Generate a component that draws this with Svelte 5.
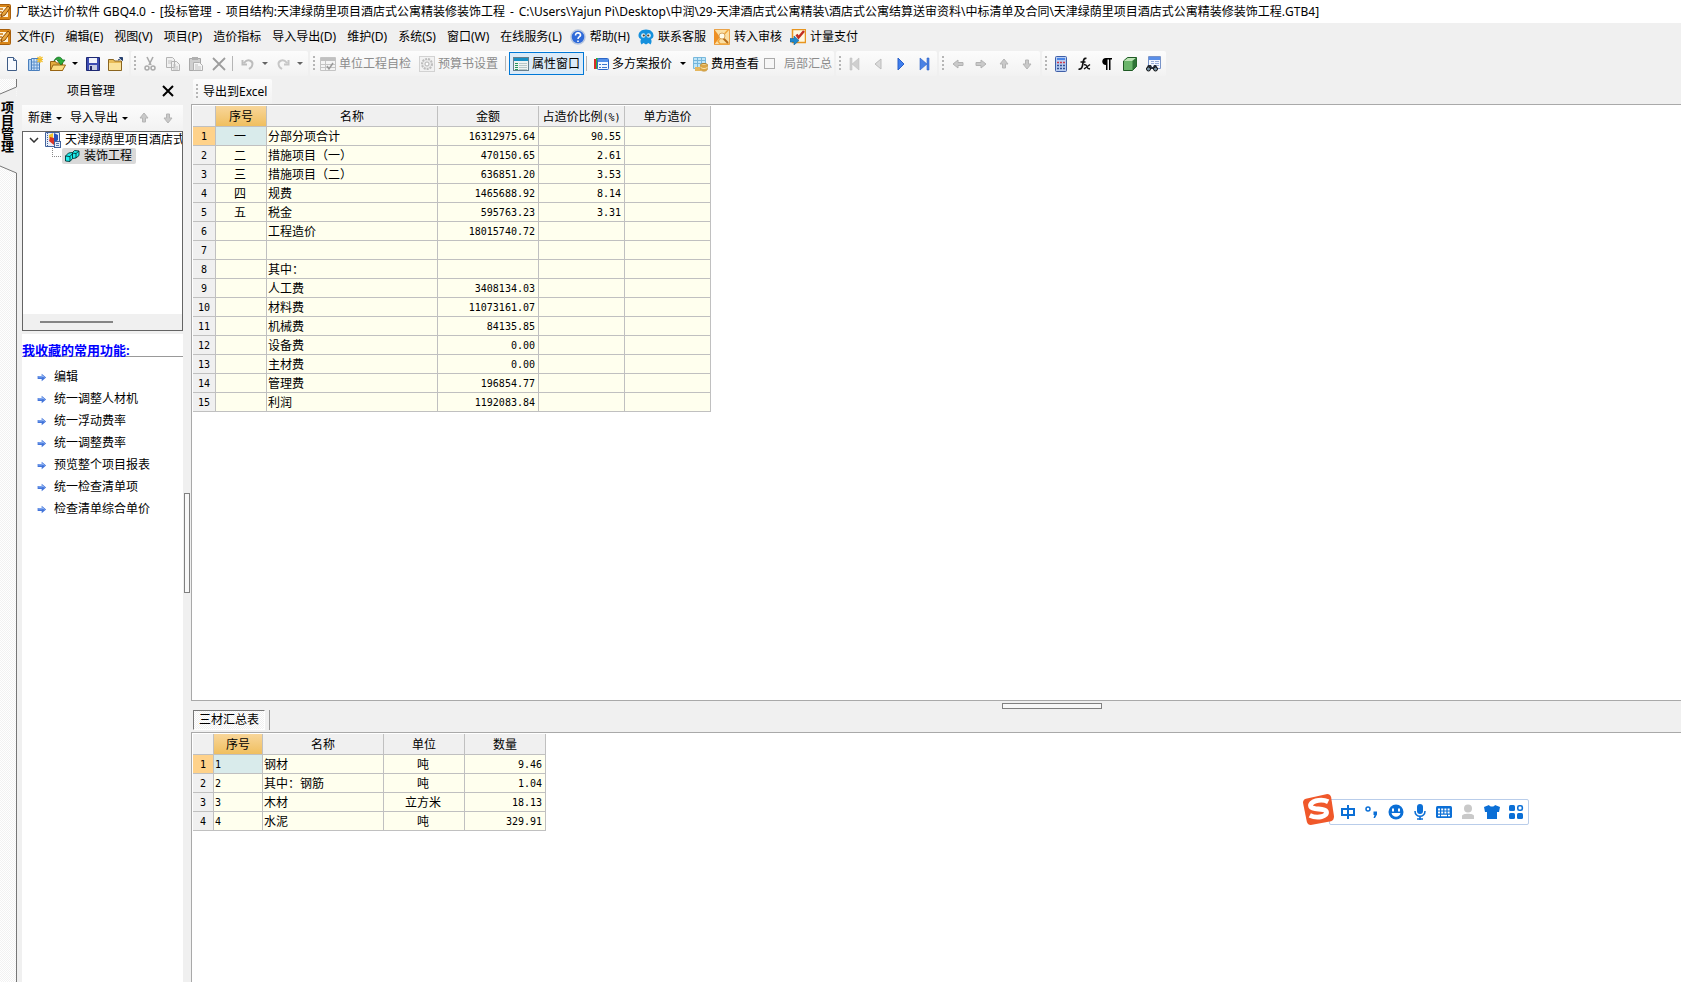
<script>
    const icons = {
        app: '<rect x="0.5" y="0.5" width="15" height="15" rx="1" fill="#d98618" stroke="#a85f0c"/><path d="M3 3h10v10H3z" fill="#fff3d8"/><path d="M3 5h5M3 8h4M3 11h4" stroke="#d07a10" stroke-width="1.5"/><path d="M13 2L7 9l-1 4 4-2 5-7z" fill="#e8a53c" stroke="#8f4d07"/>',
        doc: '<path d="M3.5 1.5h6l3 3v10h-9z" fill="#f7faff" stroke="#3f5c86"/><path d="M9.5 1.5v3h3" fill="#c5d6ee" stroke="#3f5c86"/>',
        project: '<path d="M1.5 3.5h8v11h-8z" fill="#a9ccf0" stroke="#4a7fbd"/><path d="M4.5 2.5h8v12h-8z" fill="#cfe3f8" stroke="#4a7fbd"/><path d="M7 3v11M10 3v11M5 6h7M5 9h7M5 12h7" stroke="#5a90cc"/><path d="M13 0v7M9.500 3.500h6.500M10.500 1l5 5M15.500 1l-5 5" stroke="#f3bf2b" stroke-width="1.200"/>',
        open: '<path d="M.5 5.500h5l1 1.500h6v7.500H.5z" fill="#e4ab3d" stroke="#986412"/><path d="M3 9h12.500l-3 5.500H.5z" fill="#fbdc82" stroke="#986412"/><path d="M4 5C6 0 11 0 12.500 4H15l-4 5-4-5h2.500C8.500 2.500 6 3 4 5z" fill="#2bb03c" stroke="#12691d" stroke-width=".7"/>',
        save: '<path d="M1.500 1.500h13v13h-13z" fill="#3c4bb2" stroke="#1d2872"/><path d="M4 2h8v5H4z" fill="#f2f4fb"/><path d="M4 9h8v5H4z" fill="#c6cbe3"/><path d="M5 10h2v4H5z" fill="#20286a"/>',
        folder: '<path d="M.5 3.500h5l1 1.500h7v9.500H.5z" fill="#e8bb58" stroke="#8a6520"/><path d="M1 7h12v7H1z" fill="#fbe29c"/><path d="M10 4l4-2M11.500 1.500h3v3z" stroke="#26406f" fill="#26406f"/>',
        cut: '<path d="M5 1l4 8M11 1L7 9" stroke="#aaa" stroke-width="1.600"/><circle cx="5" cy="12" r="2" fill="none" stroke="#aaa" stroke-width="1.500"/><circle cx="11" cy="12" r="2" fill="none" stroke="#aaa" stroke-width="1.500"/>',
        copy: '<path d="M1.500 1.500h6l2 2v8h-8zM6.500 5.500h5l3 3v6h-8z" fill="#f1f1f1" stroke="#b3b3b3"/><path d="M3 5h4M3 7h3M8 9h3M8 11h5M8 13h5" stroke="#c2c2c2"/>',
        paste: '<path d="M1.500 2.500h11v12h-11z" fill="#cfcfcf" stroke="#a9a9a9"/><path d="M4 1h6v3H4z" fill="#b0b0b0"/><path d="M5.500 6.500h6l3 3v5h-9z" fill="#f4f4f4" stroke="#b0b0b0"/><path d="M7 9h3M7 11h6M7 13h6" stroke="#c2c2c2"/>',
        del: '<path d="M2 2l12 12M14 2L2 14" stroke="#9d9d9d" stroke-width="1.800"/>',
        undo: '<path d="M2.500 4v4.500H7M4 7c4-5 10-2 8 3-.5 1.500-1.500 2-3 3" fill="none" stroke="#bdbdbd" stroke-width="2"/>',
        redo: '<path d="M13.500 4v4.500H9M12 7c-4-5-10-2-8 3 .5 1.500 1.500 2 3 3" fill="none" stroke="#c6c6c6" stroke-width="2"/>',
        check: '<path d="M.5 1.500h15v13H.5z" fill="#f4f4f4" stroke="#c4c4c4"/><path d="M1 2h14v3H1z" fill="#c0c0c0"/><path d="M1 8.500h14M1 11.500h14M5.500 5v9" stroke="#c4c4c4"/><path d="M7 10l2 3 4-6" fill="none" stroke="#999" stroke-width="1.500"/>',
        setting: '<rect x=".5" y=".5" width="15" height="15" fill="#f2f2f2" stroke="#d2d2d2"/><circle cx="8" cy="8" r="5" fill="#e9e9e9" stroke="#bdbdbd" stroke-width="2" stroke-dasharray="2 1"/><circle cx="8" cy="8" r="2" fill="#fff" stroke="#b5b5b5"/>',
        panel: '<rect x=".5" y="1.500" width="15" height="13" fill="#eef3f2" stroke="#677f8c"/><path d="M1 2h14v3H1z" fill="#1a8fc4"/><path d="M2 7.500h3M2 9.500h3M2 11.500h3M2 13.500h3" stroke="#27965a"/><path d="M6 7.500h8M6 9.500h8M6 11.500h8M6 13.500h8" stroke="#b7c7c8"/>',
        plans: '<path d="M1 3h3v10H1z" fill="#d92d27"/><path d="M3 2h3v11H3z" fill="#2fae3e"/><rect x="4.500" y="2.500" width="11" height="11" rx="1" fill="#f3f8ff" stroke="#2b66c7"/><path d="M5 3h10v3H5z" fill="#5490ea"/><path d="M6 8.500h2M9 8.500h5M6 11.500h2M9 11.500h5" stroke="#3f78cf"/>',
        cost: '<path d="M1.500 1.500h12v11h-12z" fill="#bfe5f7" stroke="#79b9dc"/><path d="M1 4.500h12M1 7.500h12M5.500 1v11M9.500 1v11" stroke="#74b5da"/><path d="M3 11h6v4H3z" fill="#e6b75d"/><ellipse cx="12" cy="9" rx="3.500" ry="1.500" fill="#f5d68d" stroke="#b07d22"/><path d="M8.500 9v4c0 3 7 3 7 0V9" fill="#dba646" stroke="#c49742" stroke-width=".6"/><path d="M8.500 11c1 2 6 2 7 0" fill="none" stroke="#fae3a8"/>',
        first: '<path d="M3 2h2v12H3zM12 2v12L5 8z" fill="#cfcfcf" stroke="#bababa" stroke-width=".5"/>',
        prev: '<path d="M11 3v10L5 8z" fill="#dadada" stroke="#bcbcbc"/>',
        next: '<path d="M5 2v12l6-6z" fill="#3f7fee" stroke="#2c61c7"/>',
        last: '<path d="M11 2h2v12h-2zM4 2v12l7-6z" fill="#4a82e4" stroke="#2c61c7" stroke-width=".6"/>',
        left: '<path d="M3 8l5-4v2.500h5v3H8V12z" fill="#c9c9c9" stroke="#b2b2b2"/>',
        right: '<path d="M13 8L8 4v2.500H3v3h5V12z" fill="#c9c9c9" stroke="#b2b2b2"/>',
        up: '<path d="M8 3l4 5H9.500v4h-3V8H4z" fill="#c9c9c9" stroke="#b5b5b5"/>',
        down: '<path d="M8 13l4-5H9.500V4h-3v4H4z" fill="#c9c9c9" stroke="#b5b5b5"/>',
        calc: '<rect x="2.500" y=".5" width="11" height="15" rx="1" fill="#b9cdf1" stroke="#3f5fa8"/><path d="M4 2h8v2H4z" fill="#4b85e6"/><path d="M4 6.500h2m1 0h2m1 0h2" stroke="#cf3a48" stroke-width="1.500"/><path d="M4 9.500h2m1 0h2m1 0h2M4 12.500h2m1 0h2m1 0h2" stroke="#324f93" stroke-width="1.500"/>',
        fx: '<path d="M10.500 2.500C8 1.500 7.500 4 7 7s-1 7-4.500 6M4.500 6h5" fill="none" stroke="#111" stroke-width="1.700"/><path d="M8 8.500l2 .5 2 3.500 2 .5M14 8.500L8 13" fill="none" stroke="#111" stroke-width="1.400"/>',
        para: '<path d="M7 9C2 9 2 2 7 2h6v1.500h-1.500V14H10V3.500H8.500V14H7z" fill="#000"/>',
        cube: '<path d="M1.500 5l4-3.500h9v9l-4 4h-9z" fill="#6ab56a" stroke="#1f5a24"/><path d="M2 5l4-3h8l-4 3z" fill="#bde3b6"/><path d="M10.500 5l4-3.500v9l-4 4z" fill="#2f7437"/>',
        find: '<path d="M3.500 .5h12v12h-12z" fill="#f4f8ff" stroke="#7893c8"/><path d="M4 1h11v3H4z" fill="#5a8fe8"/><path d="M6 5.500h3M10 5.500h4M6 7.500h3M10 7.500h4M10 9.500h4" stroke="#99aed8"/><path d="M3 9h3l1 2h1l1-2h2l2 4H1z" fill="#27303c"/><circle cx="3.500" cy="13" r="2" fill="#7895a8" stroke="#111"/><circle cx="10.500" cy="13" r="2" fill="#7895a8" stroke="#111"/>',
        help: '<circle cx="8" cy="8" r="7" fill="#2f6ad9" stroke="#b9c7de" stroke-width="1.500"/><path d="M5.500 6.500c0-4 5.500-3 5 0-.2 1.200-2.500 1.500-2.500 3.500M8 11.500v1.500" stroke="#fff" stroke-width="1.600" fill="none"/>',
        service: '<path d="M8 .5c5 0 7.500 3 7.500 6 0 2-1 3-2.500 3.500 1 2 .5 4-.5 5.500l-2-1.500L8 15.500 5.500 14l-2 1.500C2.500 14 2 12 3 10 1.500 9.500.5 8.500.5 6.500c0-3 2.500-6 7.500-6z" fill="#1590dd"/><circle cx="5.300" cy="6.500" r="2.200" fill="#d9edf5"/><circle cx="10.700" cy="6.500" r="2.200" fill="#d9edf5"/><circle cx="5.800" cy="6.500" r="1.100" fill="#593b22"/><circle cx="10.200" cy="6.500" r="1.100" fill="#593b22"/>',
        audit: '<path d="M.5 .5h15v15H.5z" fill="#fbdfa3" stroke="#e9a24a"/><path d="M0 0l6 8-6 8z" fill="#ee8f22"/><path d="M15 0L4 12l2 3h9" fill="none" stroke="#f0a63c" stroke-width="1.500"/><path d="M9 9l5 5" stroke="#b36b18" stroke-width="2"/><circle cx="8" cy="7" r="3" fill="#fffbe9" stroke="#d7a55f"/>',
        pay: '<path d="M2.500 .5h13v13h-13z" fill="#fff8df" stroke="#e8951f" stroke-width="1.500"/><path d="M14 2L8.500 8.500l-2-3" fill="none" stroke="#c12e20" stroke-width="2.500"/><path d="M0 9.500h4V7l5 4.500L4 16v-3H0z" fill="#2188cb" stroke="#10669f" stroke-width=".6"/>',
        building: '<path d="M.5 .5h14v14H.5z" fill="#e8eef8" stroke="#43639c"/><path d="M2.500 1v14" stroke="#43639c" stroke-dasharray="1 1"/><path d="M4 3l4-2v8L4 6z" fill="#f2c32e"/><path d="M9 1l4 2v5L9 11z" fill="#2852bb"/><path d="M5 5l4 1v7L4 9z" fill="#d93426"/><rect x="9.500" y="9.500" width="6" height="6" fill="#e3ecf9" stroke="#43639c"/><path d="M11 11.500h3M11 13.500h3" stroke="#5273b0"/>',
        unit: '<path d="M1.500 8l3-3 4-.5 2-2 4.500.5v4.500l-3 2.500-3.500.5-2.500 3-4.500-.5z" fill="#1feeee" stroke="#033" stroke-width=".9"/><path d="M1.500 8l4.500.5 2.500-3M6 8.500V13M8.500 4.500v6M8.500 5l3.500.5 3-2.500M12 5.500V10" fill="none" stroke="#033" stroke-width=".9"/>',
        arrow: '<path d="M1 5.500h6.500V2L14.500 8l-7 6v-3.500H1z" fill="#4274da"/><path d="M2 7h6.500V5l3.500 3" fill="none" stroke="#9dbff8" stroke-width="1.500"/>',
        zhong: '<path d="M2 5h12v6H2zM8 1v14" fill="none" stroke="#0b6fd6" stroke-width="2"/>',
        punct: '<circle cx="4" cy="5" r="2" fill="none" stroke="#0b6fd6" stroke-width="1.500"/><path d="M9.500 7.500h3.500v3L11 14H9.500l1-3h-1z" fill="#0b6fd6"/>',
        smile: '<circle cx="8" cy="8" r="7.500" fill="#0b6fd6"/><path d="M5 4.500v3M11 4.500v3" stroke="#fff" stroke-width="2"/><path d="M3.500 9h9c-1 5-8 5-9 0z" fill="#fff"/>',
        mic: '<rect x="5" width="6" height="10" rx="3" fill="#0b6fd6"/><path d="M3 7c0 7 10 7 10 0M8 12v4M5 15h6" fill="none" stroke="#0b6fd6" stroke-width="1.600"/>',
        keyboard: '<rect y="2" width="16" height="12" rx="1.500" fill="#0b6fd6"/><path d="M2 5.500h12M2 8.500h12" stroke="#fff" stroke-width="2" stroke-dasharray="2 1.200"/><path d="M2 11.500h2m1 0h6m1 0h2" stroke="#fff" stroke-width="1.400"/>',
        person: '<circle cx="8" cy="4.500" r="4" fill="#c9c9c9"/><path d="M2 15v-3c0-3 12-3 12 0v3z" fill="#c9c9c9"/>',
        shirt: '<path d="M5 1c1 2 5 2 6 0l5 2-1 5h-2v7H3V8H1L0 3z" fill="#0b6fd6"/>',
        tools: '<rect x="1" y="1" width="6" height="6" rx="1.500" fill="#0b6fd6"/><rect x="1" y="9" width="6" height="6" rx="1.500" fill="#0b6fd6"/><rect x="9" y="9" width="6" height="6" rx="1.500" fill="#0b6fd6"/><rect x="9.800" y="1.800" width="4.500" height="4.500" rx="1.500" fill="none" stroke="#0b6fd6" stroke-width="1.600"/>'
    };

    const titleParts = [
        '广联达计价软件 GBQ4.0',
        '[投标管理',
        '项目结构:天津绿荫里项目酒店式公寓精装修装饰工程',
        'C:\\Users\\Yajun Pi\\Desktop\\中润\\29-天津酒店式公寓精装\\酒店式公寓结算送审资料\\中标清单及合同\\天津绿荫里项目酒店式公寓精装修装饰工程.GTB4]'
    ];

    const menus = [
        { text: '文件(F)' }, { text: '编辑(E)' }, { text: '视图(V)' }, { text: '项目(P)' },
        { text: '造价指标' }, { text: '导入导出(D)' }, { text: '维护(D)' }, { text: '系统(S)' },
        { text: '窗口(W)' }, { text: '在线服务(L)' },
        { text: '帮助(H)', icon: 'help' },
        { text: '联系客服', icon: 'service' },
        { text: '转入审核', icon: 'audit' },
        { text: '计量支付', icon: 'pay' }
    ];

    // 'v' is a drop-down arrow, '|' is a separator
    const groups = [
        ['doc', 'project', 'open', 'v', 'save', 'folder'],
        ['cut', 'copy', 'paste', 'del', '|', 'undo', 'v-off', 'redo', 'v-off'],
        [
            { icon: 'check', text: '单位工程自检', off: true },
            { icon: 'setting', text: '预算书设置', off: true },
            '|',
            { icon: 'panel', text: '属性窗口', active: true },
            '|',
            { icon: 'plans', text: '多方案报价' },
            'v',
            { icon: 'cost', text: '费用查看' },
            'partial'
        ],
        ['first', 'prev', 'next', 'last'],
        ['left', 'right', 'up', 'down'],
        ['calc', 'fx', 'para', 'cube', 'find']
    ];

    const favorites = ['编辑', '统一调整人材机', '统一浮动费率', '统一调整费率', '预览整个项目报表', '统一检查清单项', '检查清单综合单价'];

    const costRows = [
        ['一', '分部分项合计', '16312975.64', '90.55'],
        ['二', '措施项目（一）', '470150.65', '2.61'],
        ['三', '措施项目（二）', '636851.20', '3.53'],
        ['四', '规费', '1465688.92', '8.14'],
        ['五', '税金', '595763.23', '3.31'],
        ['', '工程造价', '18015740.72', ''],
        ['', '', '', ''],
        ['', '其中：', '', ''],
        ['', '人工费', '3408134.03', ''],
        ['', '材料费', '11073161.07', ''],
        ['', '机械费', '84135.85', ''],
        ['', '设备费', '0.00', ''],
        ['', '主材费', '0.00', ''],
        ['', '管理费', '196854.77', ''],
        ['', '利润', '1192083.84', '']
    ];

    const materialRows = [
        ['1', '钢材', '吨', '9.46'],
        ['2', '其中：钢筋', '吨', '1.04'],
        ['3', '木材', '立方米', '18.13'],
        ['4', '水泥', '吨', '329.91']
    ];

    const imeTools = ['zhong', 'punct', 'smile', 'mic', 'keyboard', 'person', 'shirt', 'tools'];

    let partial = false;
</script>

{#snippet icon(name)}
    <svg class="icon" viewBox="0 0 16 16" aria-hidden="true">{@html icons[name]}</svg>
{/snippet}

<div class="window">
    <header class="title-bar">
        <span class="app-icon">{@render icon('app')}</span>
        {#each titleParts as part, i}
            {#if i > 0}<span class="dash">-</span>{/if}
            <span>{part}</span>
        {/each}
    </header>

    <nav class="menu-bar">
        <span class="app-icon">{@render icon('app')}</span>
        {#each menus as menu}
            <button class="menu" class:with-icon={menu.icon}>
                {#if menu.icon}{@render icon(menu.icon)}{/if}
                {menu.text}
            </button>
        {/each}
    </nav>

    <div class="tool-bar">
        {#each groups as group, g}
            <div class="group">
                {#if g > 0}<span class="grip"></span>{/if}
                {#each group as item}
                    {#if item === '|'}
                        <span class="sep"></span>
                    {:else if item === 'v' || item === 'v-off'}
                        <button class="drop" class:off={item === 'v-off'} aria-label="展开"><i class="caret"></i></button>
                    {:else if item === 'partial'}
                        <label class="partial"><input type="checkbox" bind:checked={partial} disabled>局部汇总</label>
                    {:else if item.text}
                        <button class="tool" class:off={item.off} class:active={item.active}>
                            <span class="tool-icon">{@render icon(item.icon)}</span>{item.text}
                        </button>
                    {:else}
                        <button class="icon-btn" aria-label={item}>{@render icon(item)}</button>
                    {/if}
                {/each}
            </div>
        {/each}
    </div>

    <div class="work">
        <aside class="side">
            <svg class="side-edge" viewBox="0 0 17 18" height="18" aria-hidden="true">
                <path d="M0 15L16.500 8V18H0z" fill="#f0f0f0" />
                <path d="M16.500 0V8L0 15" fill="none" stroke="#777" />
            </svg>
            <button class="side-tab">项目管理</button>
            <svg class="side-edge" viewBox="0 0 17 9" height="9" aria-hidden="true">
                <path d="M0 0H17V8L0 1z" fill="#f0f0f0" />
                <path d="M0 1L16.500 8V9" fill="none" stroke="#777" />
            </svg>
            <div class="side-rest"></div>
        </aside>

        <section class="explorer">
            <div class="explorer-head">
                <span class="explorer-title">项目管理</span>
                <button class="close" aria-label="关闭">
                    <svg viewBox="0 0 12 12" width="12" height="12"><path d="M1 1l10 10M11 1L1 11" stroke="#000" stroke-width="2" /></svg>
                </button>
            </div>
            <div class="explorer-tools">
                <button>新建<i class="caret"></i></button>
                <button>导入导出<i class="caret"></i></button>
                <button aria-label="上移">{@render icon('up')}</button>
                <button aria-label="下移">{@render icon('down')}</button>
            </div>
            <div class="tree">
                <div class="tree-rows">
                    <div class="node">
                        <svg class="chevron" viewBox="0 0 10 6" aria-hidden="true"><path d="M1 1l4 4 4-4" fill="none" stroke="#333" stroke-width="1.500" /></svg>
                        {@render icon('building')}
                        <span>天津绿荫里项目酒店式</span>
                    </div>
                    <div class="node child">
                        <span class="branch"></span>
                        <button class="selected">{@render icon('unit')}装饰工程</button>
                    </div>
                </div>
                <div class="scroll"><span class="thumb"></span></div>
            </div>
            <div class="favorites">
                <h2>我收藏的常用功能:</h2>
                <ul>
                    {#each favorites as name}
                        <li><a href="#top">{@render icon('arrow')}{name}</a></li>
                    {/each}
                </ul>
            </div>
        </section>

        <div class="v-split"><span class="handle"></span></div>

        <main>
            <div class="export-bar">
                <div class="group">
                    <span class="grip"></span>
                    <button class="export">导出到Excel</button>
                </div>
            </div>

            <div class="pane cost">
                <table>
                    <colgroup><col class="w23"><col class="w51"><col class="w171"><col class="w101"><col class="w86"><col class="w86"></colgroup>
                    <thead>
                        <tr><th></th><th class="current">序号</th><th>名称</th><th>金额</th><th>占造价比例<span class="num">(%)</span></th><th>单方造价</th></tr>
                    </thead>
                    <tbody>
                        {#each costRows as row, i}
                            <tr class:current-row={i === 0}>
                                <th class="num">{i + 1}</th>
                                <td class="center">{row[0]}</td>
                                <td>{row[1]}</td>
                                <td class="num right">{row[2]}</td>
                                <td class="num right">{row[3]}</td>
                                <td></td>
                            </tr>
                        {/each}
                    </tbody>
                </table>
            </div>

            <div class="h-split"><span class="handle"></span></div>

            <div class="tabs">
                <button class="tab">三材汇总表</button>
                <span class="tab-sep"></span>
            </div>

            <div class="pane material">
                <table>
                    <colgroup><col class="w21"><col class="w49"><col class="w121"><col class="w81"><col class="w81"></colgroup>
                    <thead>
                        <tr><th></th><th class="current">序号</th><th>名称</th><th>单位</th><th>数量</th></tr>
                    </thead>
                    <tbody>
                        {#each materialRows as row, i}
                            <tr class:current-row={i === 0}>
                                <th class="num">{i + 1}</th>
                                <td class="num">{row[0]}</td>
                                <td>{row[1]}</td>
                                <td class="center">{row[2]}</td>
                                <td class="num right">{row[3]}</td>
                            </tr>
                        {/each}
                    </tbody>
                </table>
            </div>
        </main>
    </div>

    <div class="ime">
        <svg class="ime-logo" viewBox="0 0 32 32" aria-hidden="true">
            <path d="M3 5L25 0q3 0 4 3l3 20q0 4-3 5L8 32q-3 0-4-3L0 9q0-3 3-4z" fill="#f0582a" />
            <path d="M26 8C18 4 6 8 8 13c2 4 14 1 16 5 2 5-9 8-17 4" fill="none" stroke="#fff" stroke-width="5" />
        </svg>
        {#each imeTools as tool}
            <button aria-label={tool}>{@render icon(tool)}</button>
        {/each}
    </div>
</div>

<style>
    :global(body) {
        margin: 0;
        background: #f0f0f0;
    }
    .window {
        position: relative;
        display: flex;
        flex-direction: column;
        height: 100vh;
        overflow: hidden;
        color: #000;
        font: 12px/16px "Noto Sans", "Noto Sans CJK SC", sans-serif;
        white-space: nowrap;
    }
    button {
        display: flex;
        align-items: center;
        margin: 0;
        padding: 0;
        border: 0;
        background: none;
        color: inherit;
        font: inherit;
        white-space: nowrap;
    }
    .icon {
        flex: none;
        width: 16px;
        height: 16px;
    }
    .caret {
        border: 3px solid transparent;
        border-top-color: #000;
        border-bottom: 0;
    }

    .title-bar {
        display: flex;
        align-items: center;
        height: 23px;
        background: #fff;
    }
    .dash {
        margin: 0 5px;
    }
    .app-icon {
        display: flex;
        justify-content: flex-end;
        width: 11px;
        margin-right: 5px;
        overflow: hidden;
    }
    .menu-bar {
        display: flex;
        align-items: center;
        gap: 11px;
        height: 28px;
    }
    .menu-bar .app-icon {
        margin-right: -5px;
    }
    .menu.with-icon {
        gap: 4px;
        margin-left: -3px;
    }

    .tool-bar {
        display: flex;
        gap: 2px;
        height: 28px;
    }
    .group {
        display: flex;
        align-items: center;
        height: 25px;
        padding-right: 2px;
        border-radius: 2px;
        background: linear-gradient(#fcfcfc, #f2f2f2);
    }
    .grip {
        width: 2px;
        height: 15px;
        margin: 0 2px 0 3px;
        background: repeating-linear-gradient(#b5b5b5 0 2px, transparent 2px 4px);
    }
    .sep {
        width: 1px;
        height: 15px;
        margin: 0 3px 0 2px;
        background: #b5b5b5;
    }
    .icon-btn {
        justify-content: center;
        width: 23px;
        height: 22px;
    }
    .drop {
        justify-content: center;
        width: 12px;
        height: 22px;
    }
    .drop.off {
        opacity: 0.6;
    }
    .tool {
        height: 23px;
        padding-right: 5px;
    }
    .tool-icon {
        display: flex;
        justify-content: center;
        width: 22px;
    }
    .tool.off,
    .partial {
        color: #8c8c8c;
    }
    .tool.active {
        padding-right: 3px;
        border: 1px solid #0078d7;
        background: #dcebf8;
    }
    .partial {
        display: flex;
        align-items: center;
        gap: 9px;
    }
    .partial input {
        appearance: none;
        width: 11px;
        height: 11px;
        margin: 0;
        border: 1px solid #aaa;
        background: #f6f6f6;
    }

    .work {
        display: flex;
        flex: 1;
        min-height: 0;
    }
    .side {
        display: flex;
        flex-direction: column;
        width: 17px;
        background: repeating-conic-gradient(#f2f2f2 0 25%, #fff 0 50%) 0 0 / 2px 2px;
    }
    .side-edge {
        display: block;
        width: 17px;
    }
    .side-tab {
        justify-content: flex-start;
        height: 68px;
        padding: 4px 4px 4px 0;
        background: #f0f0f0;
        font-size: 13px;
        font-weight: bold;
        line-height: 13px;
        writing-mode: vertical-rl;
    }
    .side-rest {
        flex: 1;
        border-right: 1px solid #777;
    }

    .explorer {
        display: flex;
        flex-direction: column;
        width: 161px;
        margin-left: 5px;
    }
    .explorer-head {
        display: flex;
        align-items: center;
        height: 26px;
        padding-bottom: 2px;
        box-sizing: border-box;
    }
    .explorer-title {
        margin-left: 45px;
    }
    .close {
        margin: 0 9px 0 auto;
    }
    .explorer-tools {
        display: flex;
        align-items: center;
        gap: 8px;
        height: 26px;
        padding-left: 6px;
        background: linear-gradient(#fcfcfc, #f2f2f2);
    }
    .explorer-tools button {
        gap: 4px;
    }
    .tree {
        display: flex;
        flex-direction: column;
        justify-content: space-between;
        height: 198px;
        border: 1px solid #646464;
        background: #fff;
    }
    .tree-rows {
        overflow: hidden;
    }
    .node {
        display: flex;
        align-items: center;
        gap: 4px;
        height: 16px;
    }
    .chevron {
        flex: none;
        width: 10px;
        height: 6px;
        margin: 0 2px 0 6px;
    }
    .branch {
        width: 8px;
        height: 8px;
        margin: 0 -3px 8px 29px;
        border: 1px dotted #888;
        border-width: 0 0 1px 1px;
    }
    .selected {
        gap: 4px;
        height: 16px;
        padding: 0 4px 0 2px;
        border-radius: 2px;
        background: #d9d9d9;
    }
    .scroll {
        display: flex;
        align-items: center;
        height: 16px;
        background: #f0f0f0;
    }
    .thumb {
        width: 73px;
        height: 2px;
        margin-left: 17px;
        background: #858585;
    }
    .favorites {
        flex: 1;
        margin-top: 3px;
        background: #fff;
    }
    h2 {
        margin: 0;
        padding-top: 10px;
        border-bottom: 1px solid #999;
        color: #00f;
        font-size: 13px;
        line-height: 12px;
    }
    ul {
        margin: 0;
        padding: 9px 0 0 12px;
        list-style: none;
    }
    li a {
        display: flex;
        align-items: center;
        gap: 7px;
        height: 22px;
        color: #000;
        text-decoration: none;
    }
    li .icon {
        width: 10px;
        height: 11px;
        margin-left: 3px;
    }

    .v-split,
    .h-split {
        display: flex;
        align-items: center;
        justify-content: center;
    }
    .v-split {
        width: 8px;
        margin-top: 24px;
    }
    .handle {
        box-sizing: border-box;
        border: 1px solid #808080;
        background: #f8f8f8;
    }
    .v-split .handle {
        width: 6px;
        height: 100px;
    }
    .h-split .handle {
        width: 100px;
        height: 6px;
    }
    .h-split {
        height: 9px;
        padding-left: 232px;
    }

    main {
        display: flex;
        flex: 1;
        flex-direction: column;
        min-width: 0;
    }
    .export-bar {
        display: flex;
        height: 25px;
        padding-left: 2px;
    }
    .export {
        padding: 0 3px;
    }
    .pane {
        box-sizing: border-box;
        min-height: 0;
        padding: 1px;
        border: 1px solid #a9a9a9;
        border-right: 0;
        background: #fff;
        overflow: hidden;
    }
    .cost {
        flex: 598 1 0;
    }
    .material {
        flex: 249 1 0;
        border-bottom: 0;
    }
    .tabs {
        display: flex;
        gap: 4px;
        height: 22px;
        padding-left: 2px;
    }
    .tab {
        height: 20px;
        padding: 0 5px;
        border: 1px solid;
        border-color: #777 #fff #fff #777;
        background: repeating-conic-gradient(#f0f0f0 0 25%, #fff 0 50%) 0 0 / 2px 2px;
    }
    .tab-sep {
        width: 1px;
        height: 20px;
        background: #999;
    }

    table {
        table-layout: fixed;
        width: 0;
        border-spacing: 0;
    }
    .w21 { width: 21px; }
    .w23 { width: 23px; }
    .w49 { width: 49px; }
    .w51 { width: 51px; }
    .w81 { width: 81px; }
    .w86 { width: 86px; }
    .w101 { width: 101px; }
    .w121 { width: 121px; }
    .w171 { width: 171px; }
    th,
    td {
        box-sizing: border-box;
        height: 19px;
        padding: 2px 3px 0 1px;
        border: 1px solid #c0c0c0;
        border-width: 0 1px 1px 0;
        background: #ffffee;
        font-weight: normal;
        line-height: 16px;
        text-align: left;
    }
    th {
        padding: 2px 0 0;
        background: #f0f0f0;
        text-align: center;
    }
    thead th {
        height: 21px;
    }
    .current {
        background: linear-gradient(#f8d69a, #f0bf5f);
    }
    .current-row th {
        background: #ffd28a;
    }
    .current-row td:nth-child(2) {
        background: #d9ebeb;
    }
    .center {
        text-align: center;
    }
    .right {
        text-align: right;
    }
    .num {
        font-family: "DejaVu Sans Mono", monospace;
        font-size: 10px;
    }

    .ime {
        position: absolute;
        right: 152px;
        bottom: 157px;
        display: flex;
        align-items: center;
        gap: 8px;
        box-sizing: border-box;
        height: 26px;
        padding: 0 4px 0 10px;
        border: 1px solid #b9cdea;
        border-radius: 2px;
        background: #fff;
    }
    .ime-logo {
        position: absolute;
        left: -27px;
        bottom: -1px;
        width: 31px;
        height: 31px;
    }
</style>
